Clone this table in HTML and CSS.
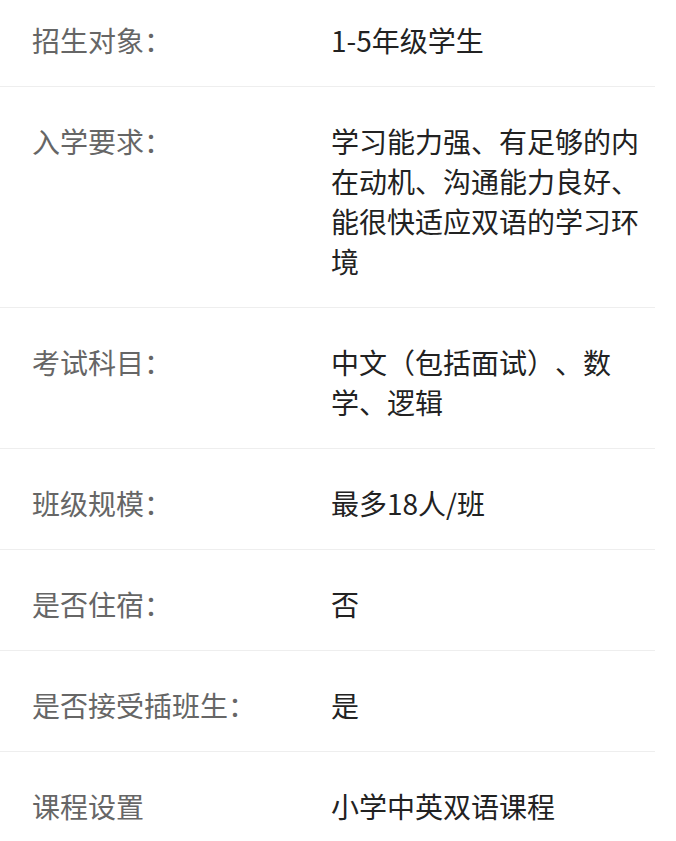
FILE: index.html
```html
<!DOCTYPE html>
<html lang="zh-CN">
<head>
    <meta charset="UTF-8">
    <meta name="viewport" content="width=device-width, initial-scale=1.0">
    <title>招生信息</title>
    <link rel="stylesheet" href="styles.css">
</head>
<body>

    <div class="info-list">
        <div class="info-row">
            <div class="info-label">招生对象：</div>
            <div class="info-value">1-5年级学生</div>
        </div>
        <div class="info-row">
            <div class="info-label">入学要求：</div>
            <div class="info-value">学习能力强、有足够的内在动机、沟通能力良好、能很快适应双语的学习环境</div>
        </div>
        <div class="info-row">
            <div class="info-label">考试科目：</div>
            <div class="info-value">中文（包括面试）、数学、逻辑</div>
        </div>
        <div class="info-row">
            <div class="info-label">班级规模：</div>
            <div class="info-value">最多18人/班</div>
        </div>
        <div class="info-row">
            <div class="info-label">是否住宿：</div>
            <div class="info-value">否</div>
        </div>
        <div class="info-row">
            <div class="info-label">是否接受插班生：</div>
            <div class="info-value">是</div>
        </div>
        <div class="info-row">
            <div class="info-label">课程设置</div>
            <div class="info-value">小学中英双语课程</div>
        </div>
    </div>

</body>
</html>
```

FILE: styles.css
```css
body {
    margin: 0;
    padding: 0;
    background: #fff;
    font-family: "Noto Sans CJK SC", "Noto Sans", sans-serif;
}

.info-list {
    width: 655px;
}

.info-row {
    display: flex;
    padding: 34px 16px 26px 32px;
    border-bottom: 1px solid #eeeeee;
    font-size: 28px;
    line-height: 40px;
    text-spacing-trim: space-all;
}

/* page is scrolled a little, first row cut at the top */
.info-row:first-child {
    padding-top: 20px;
}

.info-label {
    width: 299px;
    flex-shrink: 0;
    color: #666;
}

.info-value {
    flex: 1;
    color: #222;
}
```
